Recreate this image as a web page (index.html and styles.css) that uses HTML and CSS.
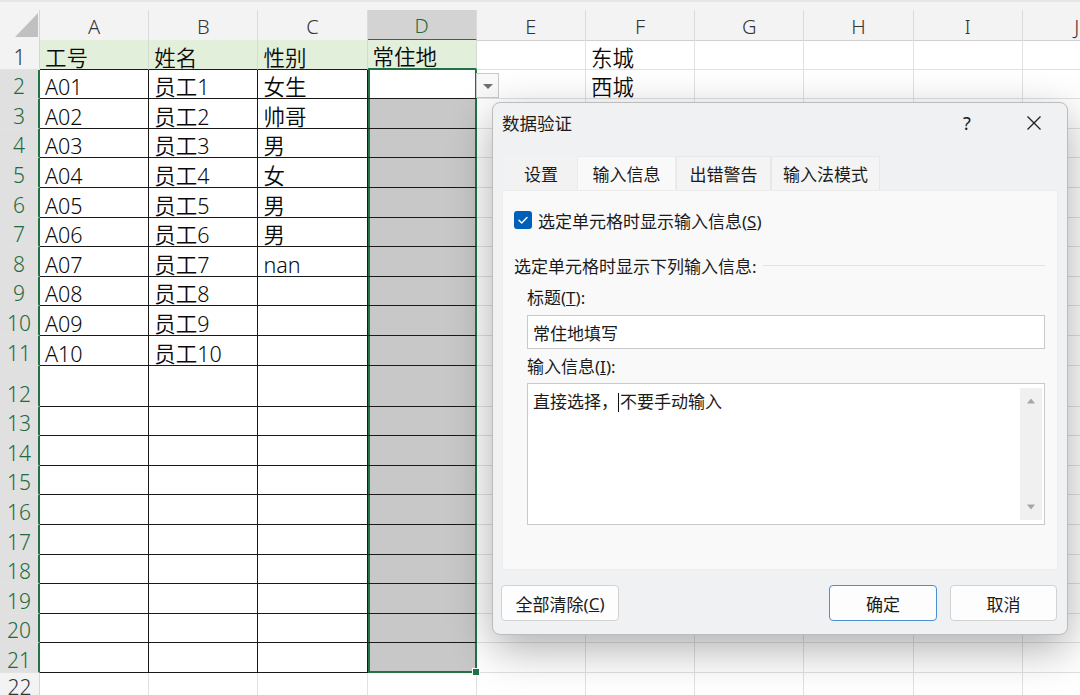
FILE: index.html
```html
<!DOCTYPE html>
<html lang="zh-CN">
<head>
<meta charset="utf-8">
<title>数据验证</title>
<link rel="stylesheet" href="styles.css">
</head>
<body>
<div class="page">
  <div class="sheet">
    <div class="topbar"></div>
    <div class="row hdr">
      <div class="corner"><svg width="40" height="30" viewBox="0 0 40 30"><polygon points="15,27 38,3 38,27" fill="#c0c0c0"/></svg></div>
      <div class="ch">A</div><div class="ch">B</div><div class="ch">C</div><div class="ch sel">D</div><div class="ch">E</div><div class="ch">F</div><div class="ch">G</div><div class="ch">H</div><div class="ch">I</div><div class="ch">J</div>
    </div>
    <div class="row">
      <div class="rh">1</div>
      <div class="c g">工号</div><div class="c g">姓名</div><div class="c g">性别</div><div class="c g d1">常住地</div>
      <div class="c"></div><div class="c">东城</div><div class="c"></div><div class="c"></div><div class="c"></div><div class="c"></div>
    </div>
    <div class="row">
      <div class="rh on">2</div>
      <div class="c b">A01</div><div class="c b">员工1</div><div class="c b">女生</div><div class="c b sel act"><span class="dd"></span></div>
      <div class="c"></div><div class="c">西城</div><div class="c"></div><div class="c"></div><div class="c"></div><div class="c"></div>
    </div>
    <div class="row">
      <div class="rh on">3</div>
      <div class="c b">A02</div><div class="c b">员工2</div><div class="c b">帅哥</div><div class="c b sel"></div>
      <div class="c"></div><div class="c"></div><div class="c"></div><div class="c"></div><div class="c"></div><div class="c"></div>
    </div>
    <div class="row">
      <div class="rh on">4</div>
      <div class="c b">A03</div><div class="c b">员工3</div><div class="c b">男</div><div class="c b sel"></div>
      <div class="c"></div><div class="c"></div><div class="c"></div><div class="c"></div><div class="c"></div><div class="c"></div>
    </div>
    <div class="row">
      <div class="rh on">5</div>
      <div class="c b">A04</div><div class="c b">员工4</div><div class="c b">女</div><div class="c b sel"></div>
      <div class="c"></div><div class="c"></div><div class="c"></div><div class="c"></div><div class="c"></div><div class="c"></div>
    </div>
    <div class="row">
      <div class="rh on">6</div>
      <div class="c b">A05</div><div class="c b">员工5</div><div class="c b">男</div><div class="c b sel"></div>
      <div class="c"></div><div class="c"></div><div class="c"></div><div class="c"></div><div class="c"></div><div class="c"></div>
    </div>
    <div class="row">
      <div class="rh on">7</div>
      <div class="c b">A06</div><div class="c b">员工6</div><div class="c b">男</div><div class="c b sel"></div>
      <div class="c"></div><div class="c"></div><div class="c"></div><div class="c"></div><div class="c"></div><div class="c"></div>
    </div>
    <div class="row">
      <div class="rh on">8</div>
      <div class="c b">A07</div><div class="c b">员工7</div><div class="c b">nan</div><div class="c b sel"></div>
      <div class="c"></div><div class="c"></div><div class="c"></div><div class="c"></div><div class="c"></div><div class="c"></div>
    </div>
    <div class="row">
      <div class="rh on">9</div>
      <div class="c b">A08</div><div class="c b">员工8</div><div class="c b"></div><div class="c b sel"></div>
      <div class="c"></div><div class="c"></div><div class="c"></div><div class="c"></div><div class="c"></div><div class="c"></div>
    </div>
    <div class="row">
      <div class="rh on">10</div>
      <div class="c b">A09</div><div class="c b">员工9</div><div class="c b"></div><div class="c b sel"></div>
      <div class="c"></div><div class="c"></div><div class="c"></div><div class="c"></div><div class="c"></div><div class="c"></div>
    </div>
    <div class="row">
      <div class="rh on">11</div>
      <div class="c b">A10</div><div class="c b">员工10</div><div class="c b"></div><div class="c b sel"></div>
      <div class="c"></div><div class="c"></div><div class="c"></div><div class="c"></div><div class="c"></div><div class="c"></div>
    </div>
    <div class="row tall">
      <div class="rh on">12</div>
      <div class="c b"></div><div class="c b"></div><div class="c b"></div><div class="c b sel"></div>
      <div class="c"></div><div class="c"></div><div class="c"></div><div class="c"></div><div class="c"></div><div class="c"></div>
    </div>
    <div class="row">
      <div class="rh on">13</div>
      <div class="c b"></div><div class="c b"></div><div class="c b"></div><div class="c b sel"></div>
      <div class="c"></div><div class="c"></div><div class="c"></div><div class="c"></div><div class="c"></div><div class="c"></div>
    </div>
    <div class="row">
      <div class="rh on">14</div>
      <div class="c b"></div><div class="c b"></div><div class="c b"></div><div class="c b sel"></div>
      <div class="c"></div><div class="c"></div><div class="c"></div><div class="c"></div><div class="c"></div><div class="c"></div>
    </div>
    <div class="row">
      <div class="rh on">15</div>
      <div class="c b"></div><div class="c b"></div><div class="c b"></div><div class="c b sel"></div>
      <div class="c"></div><div class="c"></div><div class="c"></div><div class="c"></div><div class="c"></div><div class="c"></div>
    </div>
    <div class="row">
      <div class="rh on">16</div>
      <div class="c b"></div><div class="c b"></div><div class="c b"></div><div class="c b sel"></div>
      <div class="c"></div><div class="c"></div><div class="c"></div><div class="c"></div><div class="c"></div><div class="c"></div>
    </div>
    <div class="row">
      <div class="rh on">17</div>
      <div class="c b"></div><div class="c b"></div><div class="c b"></div><div class="c b sel"></div>
      <div class="c"></div><div class="c"></div><div class="c"></div><div class="c"></div><div class="c"></div><div class="c"></div>
    </div>
    <div class="row">
      <div class="rh on">18</div>
      <div class="c b"></div><div class="c b"></div><div class="c b"></div><div class="c b sel"></div>
      <div class="c"></div><div class="c"></div><div class="c"></div><div class="c"></div><div class="c"></div><div class="c"></div>
    </div>
    <div class="row">
      <div class="rh on">19</div>
      <div class="c b"></div><div class="c b"></div><div class="c b"></div><div class="c b sel"></div>
      <div class="c"></div><div class="c"></div><div class="c"></div><div class="c"></div><div class="c"></div><div class="c"></div>
    </div>
    <div class="row">
      <div class="rh on">20</div>
      <div class="c b"></div><div class="c b"></div><div class="c b"></div><div class="c b sel"></div>
      <div class="c"></div><div class="c"></div><div class="c"></div><div class="c"></div><div class="c"></div><div class="c"></div>
    </div>
    <div class="row">
      <div class="rh on">21</div>
      <div class="c b"></div><div class="c b"></div><div class="c b"></div><div class="c b sel last"></div>
      <div class="c"></div><div class="c"></div><div class="c"></div><div class="c"></div><div class="c"></div><div class="c"></div>
    </div>
    <div class="row last-row">
      <div class="rh top">22</div>
      <div class="c"></div><div class="c"></div><div class="c"></div><div class="c"></div>
      <div class="c"></div><div class="c"></div><div class="c"></div><div class="c"></div><div class="c"></div><div class="c"></div>
    </div>
  </div>

  <div class="dlg">
    <div class="title">
      <span class="ttext">数据验证</span>
      <span class="help">?</span>
      <span class="close"><svg width="16" height="16" viewBox="0 0 16 16"><path d="M1.5 1.5 L14.5 14.5 M14.5 1.5 L1.5 14.5" stroke="#1f1f1f" stroke-width="1.3" fill="none"/></svg></span>
    </div>
    <div class="tabs">
      <div class="tab w1">设置</div>
      <div class="tab w2 on">输入信息</div>
      <div class="tab w3">出错警告</div>
      <div class="tab w4">输入法模式</div>
    </div>
    <div class="panel">
      <div class="chk-row">
        <span class="box"><svg width="18" height="18" viewBox="0 0 18 18"><path d="M5 9.2 L7.7 11.9 L13 6.4" stroke="#fff" stroke-width="1.4" fill="none" stroke-linecap="round" stroke-linejoin="round"/></svg></span>
        <span>选定单元格时显示输入信息(<u>S</u>)</span>
      </div>
      <div class="sec"><span>选定单元格时显示下列输入信息:</span><span class="rule"></span></div>
      <div class="field">
        <div class="lbl">标题(<u>T</u>):</div>
        <div class="input">常住地填写</div>
        <div class="lbl lbl2">输入信息(<u>I</u>):</div>
        <div class="ta">
          <div class="ta-text">直接选择，<span class="caret"></span>不要手动输入</div>
          <div class="sbar">
            <svg width="10" height="8" viewBox="0 0 10 8"><polygon points="1,6.5 5,1.5 9,6.5" fill="#a6a6a6"/></svg>
            <svg width="10" height="8" viewBox="0 0 10 8"><polygon points="1,1.5 9,1.5 5,6.5" fill="#a6a6a6"/></svg>
          </div>
        </div>
      </div>
    </div>
    <div class="btns">
      <div class="btn clear">全部清除(<u>C</u>)</div>
      <div class="spacer"></div>
      <div class="btn ok">确定</div>
      <div class="btn cancel">取消</div>
    </div>
  </div>
</div>
</body>
</html>
```

FILE: styles.css
```css
html, body {
  margin: 0;
  padding: 0;
  background: #ffffff;
}

.page {
  position: relative;
  width: 1080px;
  height: 695px;
  overflow: hidden;
  font-family: "Noto Sans", "Noto Sans CJK SC", sans-serif;
  color: #000;
}

.sheet {
  display: flex;
  flex-direction: column;
}

.topbar {
  height: 10px;
  background: #f3f3f3;
  box-shadow: inset 0 2px 0 #e6e6e6;
}

.row {
  display: grid;
  grid-template-columns: 40px repeat(10, 109.2px);
  height: 29.6px;
  flex: none;
}

.row.hdr { height: 30px; }
.row.tall { height: 41px; }
.row.last-row { height: 30px; }

.corner {
  background: #f3f3f3;
  border-right: 1px solid #d6d6d6;
  border-bottom: 1px solid #cfcfcf;
  box-sizing: border-box;
}
.corner svg { display: block; }

.ch {
  box-sizing: border-box;
  background: #f3f3f3;
  border-right: 1px solid #dadada;
  border-bottom: 1px solid #cfcfcf;
  display: flex;
  align-items: flex-end;
  justify-content: center;
  font-size: 20px;
  font-weight: 350;
  line-height: 26px;
  color: #333;
}
.ch.sel {
  background: #d3d3d3;
  color: #1f6b3c;
  border-bottom: 2px solid #217346;
}

.rh {
  box-sizing: border-box;
  background: #f3f3f3;
  border-right: 1px solid #d6d6d6;
  border-bottom: 1px solid #e2e2e2;
  display: flex;
  align-items: flex-end;
  justify-content: center;
  font-size: 21px;
  font-weight: 350;
  line-height: 23px;
  color: #333;
}
.rh.on {
  background: #e0e0e0;
  color: #1f6b3c;
  border-right: 2px solid #217346;
}
.rh.top {
  align-items: flex-start;
  padding-top: 3px;
  background: #f3f3f3;
}

.c {
  box-sizing: border-box;
  border-right: 1px solid #e1e1e1;
  border-bottom: 1px solid #e1e1e1;
  display: flex;
  align-items: flex-end;
  padding: 0 0 0 5px;
  font-size: 21.5px;
  font-weight: 350;
  line-height: 23px;
  color: #0a0a0a;
  white-space: nowrap;
}

.c.g {
  background: #e2efda;
  border-right-color: #d4dccd;
  border-bottom-color: #1a1a1a;
}
.c.g.d1 {
  border-bottom: 2px solid #217346;
  border-right-color: #d4dccd;
}

.c.b {
  border-right-color: #1a1a1a;
  border-bottom-color: #1a1a1a;
}

.c.sel {
  background: #c8c8c8;
  border-right: 2px solid #217346;
  box-shadow: inset 2px 0 0 #217346;
}
.c.sel.act {
  background: #ffffff;
  position: relative;
}
.c.sel.last {
  border-bottom: 2px solid #217346;
  position: relative;
}
.c.sel.last::after {
  content: "";
  position: absolute;
  right: -5px;
  bottom: -5px;
  width: 6px;
  height: 6px;
  background: #217346;
  border: 1px solid #ffffff;
}

.dd {
  position: absolute;
  left: calc(100% + 1px);
  top: 3px;
  width: 23px;
  height: 25px;
  box-sizing: border-box;
  background: #f9f9f9;
  border: 1px solid #c9c9c9;
}
.dd::after {
  content: "";
  position: absolute;
  left: 6px;
  top: 10px;
  border-left: 5px solid transparent;
  border-right: 5px solid transparent;
  border-top: 5px solid #707070;
}

/* dialog */
.dlg {
  position: absolute;
  left: 492px;
  top: 102px;
  width: 576px;
  height: 533px;
  box-sizing: border-box;
  border: 1px solid #bcbcbc;
  border-radius: 8px;
  background: #f0f1f2;
  box-shadow: 0 14px 44px rgba(0, 0, 0, 0.32);
  display: flex;
  flex-direction: column;
  font-size: 17px;
  color: #1b1b1b;
}

.title {
  height: 39px;
  display: flex;
  align-items: center;
  padding-left: 9px;
  flex: none;
}
.ttext { flex: 1; font-size: 17.5px; }
.help {
  width: 40px;
  margin-right: 24px;
  text-align: center;
  font-size: 18px;
}
.close {
  width: 46px;
  margin-right: 10px;
  display: flex;
  justify-content: center;
}
.close svg { display: block; }

.tabs {
  display: flex;
  height: 34px;
  margin: 14px 0 0 12px;
  flex: none;
}
.tab {
  box-sizing: border-box;
  display: flex;
  align-items: center;
  justify-content: center;
  background: #f4f4f4;
  border: 1px solid #e8e8e8;
  border-bottom: none;
}
.tab.on {
  background: #f9f9f9;
  border-color: #ececec;
}
.w1 { width: 72px; border-color: transparent; background: #f2f2f2; }
.w2 { width: 99px; }
.w3 { width: 95px; }
.w4 { width: 109px; }

.panel {
  margin: 0 9px;
  height: 380px;
  box-sizing: border-box;
  background: #f9f9f9;
  border: 1px solid #ececec;
  padding: 20px 12px 0 11px;
  flex: none;
}

.chk-row {
  display: flex;
  align-items: center;
  gap: 6px;
  height: 18px;
}
.box {
  width: 18px;
  height: 18px;
  border-radius: 3px;
  background: #005fb8;
  flex: none;
}
.box svg { display: block; }

.sec {
  margin-top: 25px;
  height: 22px;
  display: flex;
  align-items: center;
}
.rule {
  flex: 1;
  height: 1px;
  background: #e4e4e4;
  margin-left: 6px;
}

.field {
  margin-left: 13px;
}
.lbl {
  height: 22px;
  line-height: 22px;
  margin-top: 11px;
}
.lbl2 { margin-top: 7px; }

.input {
  margin-top: 6px;
  height: 34px;
  box-sizing: border-box;
  border: 1px solid #c9c9c9;
  background: #ffffff;
  display: flex;
  align-items: center;
  padding-left: 5px;
}

.ta {
  margin-top: 5px;
  height: 142px;
  box-sizing: border-box;
  border: 1px solid #c9c9c9;
  background: #ffffff;
  display: flex;
}
.ta-text {
  flex: 1;
  padding: 7px 5px 0;
  line-height: 22px;
}
.caret {
  display: inline-block;
  width: 0;
  height: 19px;
  border-left: 1px solid #111;
  vertical-align: -4px;
  margin-right: 1px;
}
.sbar {
  width: 22px;
  margin: 4px 2px 4px 0;
  background: #f0f0f0;
  display: flex;
  flex-direction: column;
  align-items: center;
  justify-content: space-between;
  padding: 9px 0;
  box-sizing: border-box;
}
.sbar svg { display: block; }

.btns {
  display: flex;
  margin: 15px 10px 0 8px;
  height: 36px;
  gap: 13px;
  flex: none;
}
.spacer { flex: 1; }
.btn {
  box-sizing: border-box;
  height: 36px;
  border: 1px solid #d2d2d2;
  border-radius: 4px;
  background: #fdfdfd;
  display: flex;
  align-items: center;
  justify-content: center;
}
.btn.clear { width: 118px; }
.btn.ok { width: 108px; border-color: #4c8fd2; }
.btn.cancel { width: 107px; }
```
